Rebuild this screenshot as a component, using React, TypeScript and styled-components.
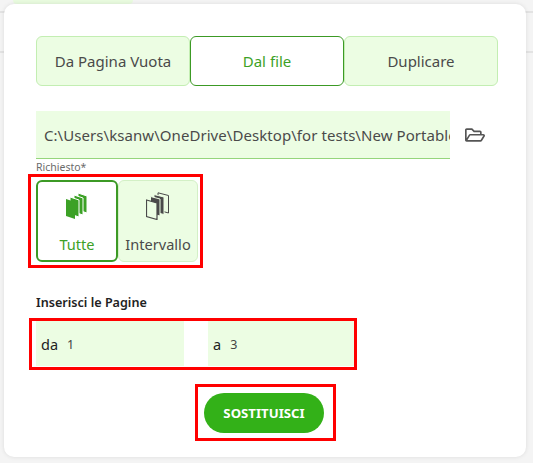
import React from "react";
import styled, { createGlobalStyle } from "styled-components";
import { FaRegFolderOpen } from "react-icons/fa";

const Global = createGlobalStyle`
  html, body { margin: 0; padding: 0; }
  body {
    width: 533px;
    height: 463px;
    overflow: hidden;
    font-family: "Noto Sans", "Open Sans", sans-serif;
    background:
      linear-gradient(#e3e3e3, #e3e3e3) 0 11px / 100% 2px no-repeat,
      linear-gradient(#e3e3e3, #e3e3e3) 0 51px / 100% 2px no-repeat,
      linear-gradient(#f4f4f4, #f4f4f4) 0 0 / 100% 100% no-repeat;
  }
`;

const Page = styled.div`
  display: flex;
  flex-direction: column;
  width: 533px;
  height: 463px;
`;

const TopPill = styled.div`
  width: 120px;
  height: 4px;
  margin-left: 13px;
  flex: none;
  background: #e9fbdf;
  border-radius: 0 0 14px 14px;
`;

const Card = styled.main`
  width: 522px;
  height: 453px;
  margin-left: 4px;
  padding: 32px 28px 0 32px;
  box-sizing: border-box;
  background: #fff;
  border-radius: 10px;
  box-shadow: 0 0 4px rgba(0, 0, 0, 0.1);
  display: flex;
  flex-direction: column;
  align-items: flex-start;
`;

const Tabs = styled.div`
  display: flex;
  width: 462px;
  height: 50px;
`;

const Tab = styled.button<{ $active?: boolean }>`
  flex: 1;
  padding: 0;
  box-sizing: border-box;
  font: 400 15px "Noto Sans", "Open Sans", sans-serif;
  border-radius: 6px;
  border: 1px solid ${(p) => (p.$active ? "#3c9a25" : "#c3eeb2")};
  background: ${(p) => (p.$active ? "#fff" : "#ecfde3")};
  color: ${(p) => (p.$active ? "#3ca126" : "#4a4a4a")};
`;

const PathRow = styled.div`
  display: flex;
  align-items: center;
  margin-top: 25px;
  gap: 15px;
`;

const PathField = styled.div`
  width: 414px;
  height: 48px;
  box-sizing: border-box;
  padding-left: 8px;
  display: flex;
  align-items: center;
  overflow: hidden;
  white-space: nowrap;
  background: #ecfde3;
  border-bottom: 1px solid #95d57c;
  font-size: 15px;
  letter-spacing: 0.06px;
  color: #4a4a4a;
`;

const FolderIcon = styled(FaRegFolderOpen)`
  width: 20px;
  height: 18px;
  color: #555;
`;

const Hint = styled.div`
  height: 15px;
  font-size: 10.5px;
  line-height: 16px;
  color: #6b6b6b;
`;

const Marked = styled.div`
  border: 3px solid #f00;
  box-sizing: border-box;
  background: #fff;
`;

const ModeBox = styled(Marked)`
  display: flex;
  width: 175px;
  height: 94px;
  margin-left: -8px;
  padding: 3px 0 3px 5px;
`;

const Mode = styled.button<{ $active?: boolean; $w: number }>`
  flex: none;
  width: ${(p) => p.$w}px;
  height: 82px;
  padding: 0;
  box-sizing: border-box;
  display: flex;
  flex-direction: column;
  align-items: center;
  font: 400 14.6px "Noto Sans", "Open Sans", sans-serif;
  border-radius: 6px;
  border: ${(p) => (p.$active ? "2px solid #3c9a25" : "1px solid #d3f0c6")};
  background: ${(p) => (p.$active ? "#fff" : "#ecfde3")};
  color: ${(p) => (p.$active ? "#3ca126" : "#4a4a4a")};
`;

const ModeIcon = styled.svg<{ $top: number }>`
  width: 24px;
  height: 28px;
  margin-top: ${(p) => p.$top}px;
  flex: none;
`;

const ModeLabel = styled.span`
  margin-top: 14px;
  line-height: 20px;
`;

const SectionTitle = styled.div`
  margin-top: 27px;
  font-size: 12.6px;
  font-weight: 600;
  line-height: 16px;
  color: #222;
`;

const RangeBox = styled(Marked)`
  display: flex;
  width: 328px;
  height: 52px;
  margin: 7px 0 0 -7px;
  padding: 0 0 1px 4px;
  align-items: center;
  gap: 24px;
`;

const RangeField = styled.div<{ $w: number }>`
  width: ${(p) => p.$w}px;
  height: 45px;
  box-sizing: border-box;
  padding-left: 5px;
  display: flex;
  align-items: center;
  gap: 9px;
  background: #ecfde3;
`;

const RangeLabel = styled.span`
  font-size: 14.5px;
  color: #222;
`;

const RangeValue = styled.span`
  margin-top: 2px;
  font-size: 12.5px;
  color: #444;
`;

const ActionBox = styled(Marked)`
  display: flex;
  width: 141px;
  height: 57px;
  margin: 14px 0 0 159px;
  align-items: center;
  justify-content: center;
  padding-right: 3px;
`;

const Submit = styled.button`
  width: 120px;
  height: 40px;
  padding: 0;
  border: 0;
  border-radius: 20px;
  background: #33b118;
  color: #fff;
  font: 700 13.2px "Noto Sans", "Open Sans", sans-serif;
`;

const stripes = [12, 8, 4];

function AllIcon() {
  return (
    <ModeIcon $top={10} viewBox="0 0 24 28">
      {stripes.map((x) => (
        <path
          key={x}
          d={`M${x + 1} ${7 - x / 2}L${x + 10} ${10 - x / 2}V${27 - x / 2}L${x + 1} ${24 - x / 2}Z`}
          fill="#3ca126"
          stroke="#fff"
          strokeWidth="1"
        />
      ))}
      <path d="M1 7L10 10V27L1 24Z" fill="#3ca126" />
    </ModeIcon>
  );
}

function RangeIcon() {
  return (
    <ModeIcon $top={11} viewBox="2 0 24 28">
      <path d="M14 .8L24.5 3.5V21L14 18Z" fill="#ecfde3" stroke="#4a4a4a" strokeWidth="1" />
      <path d="M10 2.5L20 5V22.5L10 20Z" fill="#4a4a4a" stroke="#ecfde3" strokeWidth="1" />
      <path d="M6.5 4.5L16 7V24L6.5 21.5Z" fill="#4a4a4a" stroke="#ecfde3" strokeWidth="1" />
      <path d="M2.5 8L13 11V27.5L2.5 24.5Z" fill="#ecfde3" stroke="#4a4a4a" strokeWidth="1.2" />
    </ModeIcon>
  );
}

export default function App() {
  return (
    <Page>
      <Global />
      <TopPill />
      <Card>
        <Tabs>
          <Tab>Da Pagina Vuota</Tab>
          <Tab $active>Dal file</Tab>
          <Tab>Duplicare</Tab>
        </Tabs>
        <PathRow>
          <PathField>C:\Users\ksanw\OneDrive\Desktop\for tests\New Portable</PathField>
          <FolderIcon />
        </PathRow>
        <Hint>Richiesto*</Hint>
        <ModeBox>
          <Mode $active $w={82}>
            <AllIcon />
            <ModeLabel>Tutte</ModeLabel>
          </Mode>
          <Mode $w={80}>
            <RangeIcon />
            <ModeLabel>Intervallo</ModeLabel>
          </Mode>
        </ModeBox>
        <SectionTitle>Inserisci le Pagine</SectionTitle>
        <RangeBox>
          <RangeField $w={148}>
            <RangeLabel>da</RangeLabel>
            <RangeValue>1</RangeValue>
          </RangeField>
          <RangeField $w={146}>
            <RangeLabel>a</RangeLabel>
            <RangeValue>3</RangeValue>
          </RangeField>
        </RangeBox>
        <ActionBox>
          <Submit>SOSTITUISCI</Submit>
        </ActionBox>
      </Card>
    </Page>
  );
}
